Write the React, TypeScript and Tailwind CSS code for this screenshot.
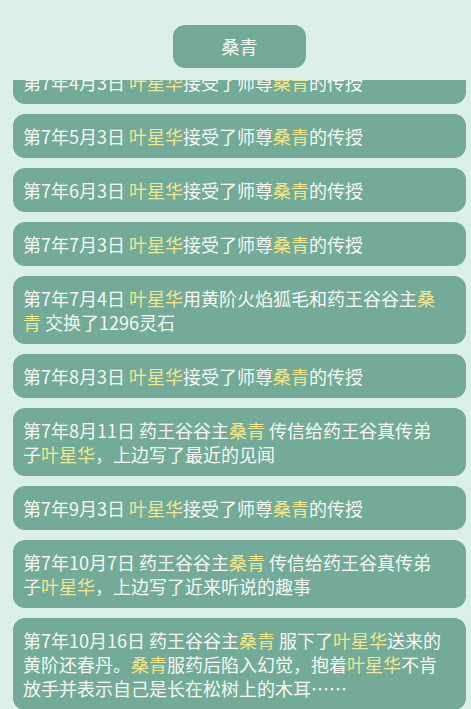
const Y = ({ children }: { children: React.ReactNode }) => (
  <span className="text-[#f0e68e]">{children}</span>
);

type Entry = { id: number; body: React.ReactNode };

const taught = (date: string) => (
  <>
    {date} <Y>叶星华</Y>接受了师尊<Y>桑青</Y>的传授
  </>
);

const entries: Entry[] = [
  { id: 1, body: taught('第7年4月3日') },
  { id: 2, body: taught('第7年5月3日') },
  { id: 3, body: taught('第7年6月3日') },
  { id: 4, body: taught('第7年7月3日') },
  {
    id: 5,
    body: (
      <>
        第7年7月4日 <Y>叶星华</Y>用黄阶火焰狐毛和药王谷谷主<Y>桑青</Y> 交换了1296灵石
      </>
    ),
  },
  { id: 6, body: taught('第7年8月3日') },
  {
    id: 7,
    body: (
      <>
        第7年8月11日 药王谷谷主<Y>桑青</Y> 传信给药王谷真传弟子<Y>叶星华</Y>，上边写了最近的见闻
      </>
    ),
  },
  { id: 8, body: taught('第7年9月3日') },
  {
    id: 9,
    body: (
      <>
        第7年10月7日 药王谷谷主<Y>桑青</Y> 传信给药王谷真传弟子<Y>叶星华</Y>，上边写了近来听说的趣事
      </>
    ),
  },
  {
    id: 10,
    body: (
      <>
        第7年10月16日 药王谷谷主<Y>桑青</Y> 服下了<Y>叶星华</Y>送来的黄阶还春丹。<Y>桑青</Y>服药后陷入幻觉，抱着<Y>叶星华</Y>不肯放手并表示自己是长在松树上的木耳……
      </>
    ),
  },
];

export default function App() {
  return (
    <div
      className="h-[709px] w-full overflow-hidden bg-[#dcefe9] pl-[13px] pr-[5px]"
      style={{ fontFamily: '"Noto Sans CJK SC", "Noto Sans", sans-serif' }}
    >
      <div className="flex justify-center pt-[25px]">
        <div className="flex h-[43px] w-[133px] items-center justify-center rounded-[12px] bg-[#73aa97] text-[18px] text-[#f5f8f4]">
          桑青
        </div>
      </div>

      <div className="mt-[12px] h-[629px] overflow-hidden">
        <div className="-mt-[20px] flex flex-col gap-[10px]">
          {entries.map((e) => (
            <div
              key={e.id}
              className="rounded-[12px] bg-[#74ab98] py-[10px] pl-[10px] pr-[22px] text-[18px] leading-[24px] text-[#f5f8f4]"
            >
              {e.body}
            </div>
          ))}
        </div>
      </div>
    </div>
  );
}
